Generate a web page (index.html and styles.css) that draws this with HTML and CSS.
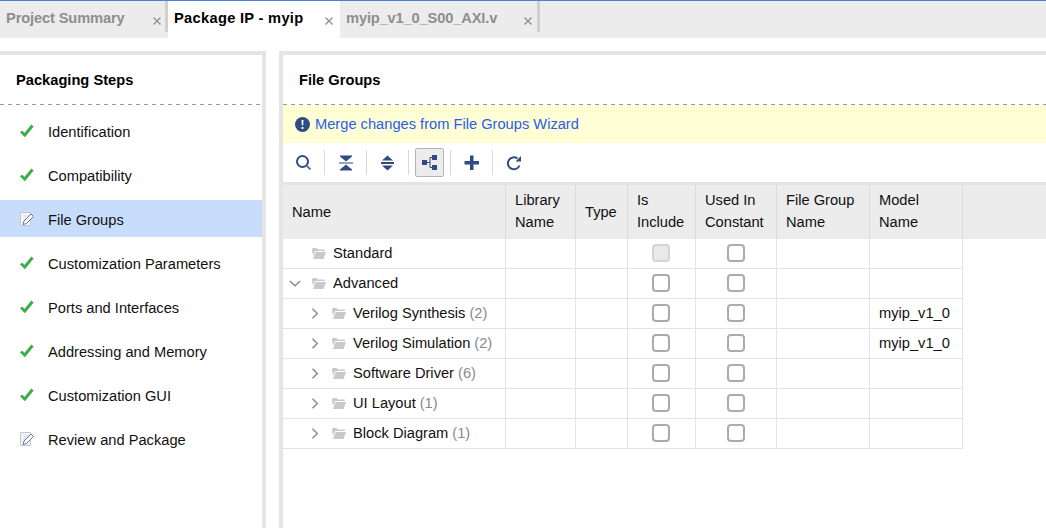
FILE: index.html
```html
<!DOCTYPE html>
<html lang="en">
<head>
  <meta charset="UTF-8" />
  <meta name="viewport" content="width=device-width, initial-scale=1" />
  <title>Package IP - myip</title>
  <link rel="stylesheet" href="styles.css">
</head>
<body>
  <svg class="defs" width="0" height="0" aria-hidden="true">
    <symbol id="i-close" viewBox="0 0 8 8"><path d="M.5.5l7 7M7.5.5l-7 7" fill="none" stroke="#8f8f8f" stroke-width="1.3"/></symbol>
    <symbol id="i-check" viewBox="0 0 14 13"><path d="M1 7l3.800 3.500L12.500 1" fill="none" stroke="#3fae49" stroke-width="3"/></symbol>
    <symbol id="i-edit" viewBox="0 0 14 14">
      <path d="M.5.5h10v13H.5z" fill="#f6f6f8" stroke="#c4c6cc"/>
      <path d="M3 4h6M3 7h4" stroke="#d6d8de"/>
      <path d="M3 12.500l1-3.500 7-7 2.500 2.500-7 7z" fill="#fff" stroke="#5f74a8"/>
    </symbol>
    <symbol id="i-folder" viewBox="0 0 14 11">
      <path d="M0 1.500C0 .7.7 0 1.500 0h3L6 1.500h6c.6 0 1 .4 1 1V3H3.200L1 8z M1 11l2.600-7H14l-2.500 7z" fill="#c9c9c9"/>
    </symbol>
    <symbol id="i-right" viewBox="0 0 7 11"><path d="M1 .8L5.800 5.500 1 10.200" fill="none" stroke="#8c8c8c" stroke-width="1.500"/></symbol>
    <symbol id="i-down" viewBox="0 0 12 7"><path d="M.8 1L6 5.800 11.200 1" fill="none" stroke="#8c8c8c" stroke-width="1.500"/></symbol>
  </svg>

  <div class="tabs">
    <div class="tab tab-project"><span>Project Summary</span><svg class="close"><use href="#i-close"/></svg></div>
    <span class="tab-sep"></span>
    <div class="tab tab-package active"><span>Package IP - myip</span><svg class="close"><use href="#i-close"/></svg></div>
    <div class="tab tab-source"><span>myip_v1_0_S00_AXI.v</span><svg class="close"><use href="#i-close"/></svg></div>
    <span class="tab-sep"></span>
  </div>

  <div class="main">
    <aside class="panel steps">
      <div class="panel-head">Packaging Steps</div>
      <ul class="step-list">
        <li class="step"><svg class="step-icon"><use href="#i-check"/></svg>Identification</li>
        <li class="step"><svg class="step-icon"><use href="#i-check"/></svg>Compatibility</li>
        <li class="step current"><svg class="step-icon"><use href="#i-edit"/></svg>File Groups</li>
        <li class="step"><svg class="step-icon"><use href="#i-check"/></svg>Customization Parameters</li>
        <li class="step"><svg class="step-icon"><use href="#i-check"/></svg>Ports and Interfaces</li>
        <li class="step"><svg class="step-icon"><use href="#i-check"/></svg>Addressing and Memory</li>
        <li class="step"><svg class="step-icon"><use href="#i-check"/></svg>Customization GUI</li>
        <li class="step"><svg class="step-icon"><use href="#i-edit"/></svg>Review and Package</li>
      </ul>
    </aside>

    <section class="panel groups">
      <div class="panel-head">File Groups</div>
      <div class="banner">
        <svg class="banner-icon" viewBox="0 0 15 15"><circle cx="7.500" cy="7.500" r="7.500" fill="#2f4b82"/><path d="M6.500 3h2l-.3 5.600H6.800zM6.500 10h2v2h-2z" fill="#fff"/></svg>
        <a class="banner-link" href="#">Merge changes from File Groups Wizard</a>
      </div>

      <div class="toolbar">
        <div class="tool">
          <svg width="16" height="16" viewBox="0 0 16 16"><circle cx="6.500" cy="6.500" r="5.500" fill="none" stroke="#2f4b82" stroke-width="2"/><path d="M11 11l3.500 3.500" stroke="#5f7399" stroke-width="2"/></svg>
        </div>
        <div class="tool">
          <svg width="14" height="16" viewBox="0 0 14 16"><path d="M1 .5h12V1.500L7 6.500 1 1.500zM0 7.500h14v1H0zM7 9.500l6 5v1H1v-1z" fill="#2f4b82"/></svg>
        </div>
        <div class="tool">
          <svg width="13" height="16" viewBox="0 0 13 16"><path d="M6.500 .5l5.500 5H1zM0 7h13v2H0zM6.500 15.500l-5.500-5h11z" fill="#2f4b82"/></svg>
        </div>
        <div class="tool">
          <span class="tool-on">
            <svg width="16" height="15" viewBox="0 0 16 15"><path d="M0 5h5v5H0zM10 0h5v5h-5zM10 10h5v5h-5z" fill="#2f4b82"/><path d="M5 7.500h3M8 2.500v10M8 2.500h2M8 12.500h2" fill="none" stroke="#2f4b82"/></svg>
          </span>
        </div>
        <div class="tool">
          <svg width="16" height="16" viewBox="0 0 16 16"><path d="M6 .5h3.500V6H15v3.500H9.500V15H6V9.500H.5V6H6z" fill="#2f4b82"/></svg>
        </div>
        <div class="tool tool-last">
          <svg width="16" height="16" viewBox="0 0 16 16"><path d="M13.500 10.500A6 6 0 1 1 11.500 3.500" fill="none" stroke="#2f4b82" stroke-width="2"/><path d="M15 1v5.500H9.500z" fill="#2f4b82"/></svg>
        </div>
      </div>

      <table class="grid">
        <colgroup>
          <col class="c-name"><col class="c-lib"><col class="c-type"><col class="c-inc"><col class="c-const"><col class="c-fg"><col class="c-model"><col>
        </colgroup>
        <thead>
          <tr>
            <th class="one">Name</th><th>Library<br>Name</th><th class="one">Type</th><th>Is<br>Include</th><th>Used In<br>Constant</th><th>File Group<br>Name</th><th>Model<br>Name</th><th class="filler"></th>
          </tr>
        </thead>
        <tbody>
          <tr>
            <td><div class="node"><span class="toggle"></span><svg class="folder"><use href="#i-folder"/></svg>Standard</div></td>
            <td></td><td></td><td class="mid"><span class="box off"></span></td><td class="mid"><span class="box"></span></td><td></td><td></td><td class="filler"></td>
          </tr>
          <tr>
            <td><div class="node"><svg class="toggle"><use href="#i-down"/></svg><svg class="folder"><use href="#i-folder"/></svg>Advanced</div></td>
            <td></td><td></td><td class="mid"><span class="box"></span></td><td class="mid"><span class="box"></span></td><td></td><td></td><td class="filler"></td>
          </tr>
          <tr>
            <td><div class="node child"><svg class="toggle"><use href="#i-right"/></svg><svg class="folder"><use href="#i-folder"/></svg>Verilog Synthesis<span class="count">(2)</span></div></td>
            <td></td><td></td><td class="mid"><span class="box"></span></td><td class="mid"><span class="box"></span></td><td></td><td>myip_v1_0</td><td class="filler"></td>
          </tr>
          <tr>
            <td><div class="node child"><svg class="toggle"><use href="#i-right"/></svg><svg class="folder"><use href="#i-folder"/></svg>Verilog Simulation<span class="count">(2)</span></div></td>
            <td></td><td></td><td class="mid"><span class="box"></span></td><td class="mid"><span class="box"></span></td><td></td><td>myip_v1_0</td><td class="filler"></td>
          </tr>
          <tr>
            <td><div class="node child"><svg class="toggle"><use href="#i-right"/></svg><svg class="folder"><use href="#i-folder"/></svg>Software Driver<span class="count">(6)</span></div></td>
            <td></td><td></td><td class="mid"><span class="box"></span></td><td class="mid"><span class="box"></span></td><td></td><td></td><td class="filler"></td>
          </tr>
          <tr>
            <td><div class="node child"><svg class="toggle"><use href="#i-right"/></svg><svg class="folder"><use href="#i-folder"/></svg>UI Layout<span class="count">(1)</span></div></td>
            <td></td><td></td><td class="mid"><span class="box"></span></td><td class="mid"><span class="box"></span></td><td></td><td></td><td class="filler"></td>
          </tr>
          <tr>
            <td><div class="node child"><svg class="toggle"><use href="#i-right"/></svg><svg class="folder"><use href="#i-folder"/></svg>Block Diagram<span class="count">(1)</span></div></td>
            <td></td><td></td><td class="mid"><span class="box"></span></td><td class="mid"><span class="box"></span></td><td></td><td></td><td class="filler"></td>
          </tr>
        </tbody>
      </table>
    </section>
  </div>
</body>
</html>
```

FILE: styles.css
```css
* {
  box-sizing: border-box;
}
html, body {
  height: 100%;
}
body {
  margin: 0;
  font-family: "Liberation Sans", Arial, sans-serif;
  font-size: 14.67px;
  color: #111;
  background: #fff;
  display: flex;
  flex-direction: column;
  overflow: hidden;
}
.defs {
  position: absolute;
}

/* tab strip */
.tabs {
  display: flex;
  height: 38px;
  flex: none;
  background: #ececec;
  border-top: 1px solid #4a7fd6;
}
.tab {
  display: flex;
  justify-content: space-between;
  font-weight: bold;
  line-height: 20px;
  padding: 7px 5px 0 6px;
  color: #8e8e8e;
}
.tab-project {
  width: 166px;
  letter-spacing: -0.13px;
}
.tab-package {
  width: 172px;
  padding-right: 7px;
  letter-spacing: 0.3px;
}
.tab-source {
  width: 197px;
  letter-spacing: -0.15px;
}
.tab.active {
  background: #fff;
  color: #000;
}
.tab-sep {
  width: 3px;
  height: 31px;
  background: #cfcfcf;
  margin-left: -1px;
}
.tab-sep:last-child {
  margin-left: 0;
}
.close {
  width: 8px;
  height: 8px;
  margin-top: 9px;
}

/* panels */
.main {
  flex: 1;
  display: flex;
  gap: 13px;
  padding-top: 13px;
  min-height: 0;
}
.panel {
  border-top: 4px solid #e5e5e5;
}
.steps {
  width: 266px;
  flex: none;
  border-right: 4px solid #e5e5e5;
}
.groups {
  flex: 1;
  border-left: 4px solid #e5e5e5;
  min-width: 0;
}
.panel-head {
  height: 50px;
  padding-left: 16px;
  line-height: 50px;
  font-weight: bold;
  color: #000;
  background: repeating-linear-gradient(90deg, #9a9a9a 0 4px, transparent 4px 8px) left bottom / 100% 1px no-repeat;
}

/* packaging steps */
.step-list {
  list-style: none;
  margin: 0;
  padding: 7px 0 0;
  display: flex;
  flex-direction: column;
  gap: 7px;
}
.step {
  height: 37px;
  display: flex;
  align-items: center;
  padding: 2px 0 0 20px;
}
.step.current {
  background: #c8dcfb;
}
.step-icon {
  width: 14px;
  height: 14px;
  margin: -2px 14px 0 0;
  flex: none;
}

/* banner + toolbar */
.banner {
  height: 38px;
  display: flex;
  align-items: center;
  padding-left: 12px;
  background: #ffffd6;
}
.banner-icon {
  width: 15px;
  height: 15px;
  margin-right: 5px;
}
.banner-link {
  color: #2a5cf0;
  text-decoration: none;
}
.toolbar {
  height: 39px;
  display: flex;
  align-items: center;
}
.tool {
  width: 42px;
  height: 25px;
  display: flex;
  align-items: center;
  justify-content: center;
  border-right: 1px solid #d8d8d8;
}
.tool-last {
  border-right: none;
}
.tool-on {
  width: 29px;
  height: 29px;
  display: flex;
  align-items: center;
  justify-content: center;
  background: #ececec;
  border: 1px solid #b4b4b4;
  border-radius: 2px;
}

/* table */
.grid {
  width: 100%;
  table-layout: fixed;
  border-collapse: separate;
  border-spacing: 0;
  border-top: 3px solid #e3e3e3;
}
.c-name { width: 223px; }
.c-lib { width: 70px; }
.c-type { width: 52px; }
.c-inc { width: 68px; }
.c-const { width: 81px; }
.c-fg { width: 93px; }
.c-model { width: 93px; }
.grid th {
  height: 54px;
  padding: 0 0 2px 9px;
  text-align: left;
  font-weight: normal;
  line-height: 22px;
  background: #ececec;
  border-right: 1px solid #dcdcdc;
}
.grid th.one {
  padding-bottom: 0;
}
.grid td {
  height: 30px;
  padding: 0 0 1px 9px;
  white-space: nowrap;
  border-right: 1px solid #e3e3e3;
  border-bottom: 1px solid #e3e3e3;
}
.grid th.filler {
  border-right: none;
}
.grid td.filler {
  border: none;
}
.grid td:first-child {
  padding-left: 6px;
}
.grid td.mid {
  padding: 0 1px 1px 0;
  text-align: center;
}
.node {
  display: flex;
  align-items: center;
}
.node.child {
  padding-left: 20px;
}
.toggle {
  width: 12px;
  height: 11px;
  margin-right: 11px;
  flex: none;
}
.folder {
  width: 14px;
  height: 11px;
  margin-right: 7px;
  flex: none;
}
.count {
  margin-left: 4px;
  color: #8a8a8a;
}
.box {
  display: block;
  width: 18px;
  height: 18px;
  margin: 0 auto;
  border: 2px solid #ababab;
  border-radius: 4px;
  background: #fff;
}
.box.off {
  background: #e9e9e9;
  border-color: #d4d4d4;
}
```
